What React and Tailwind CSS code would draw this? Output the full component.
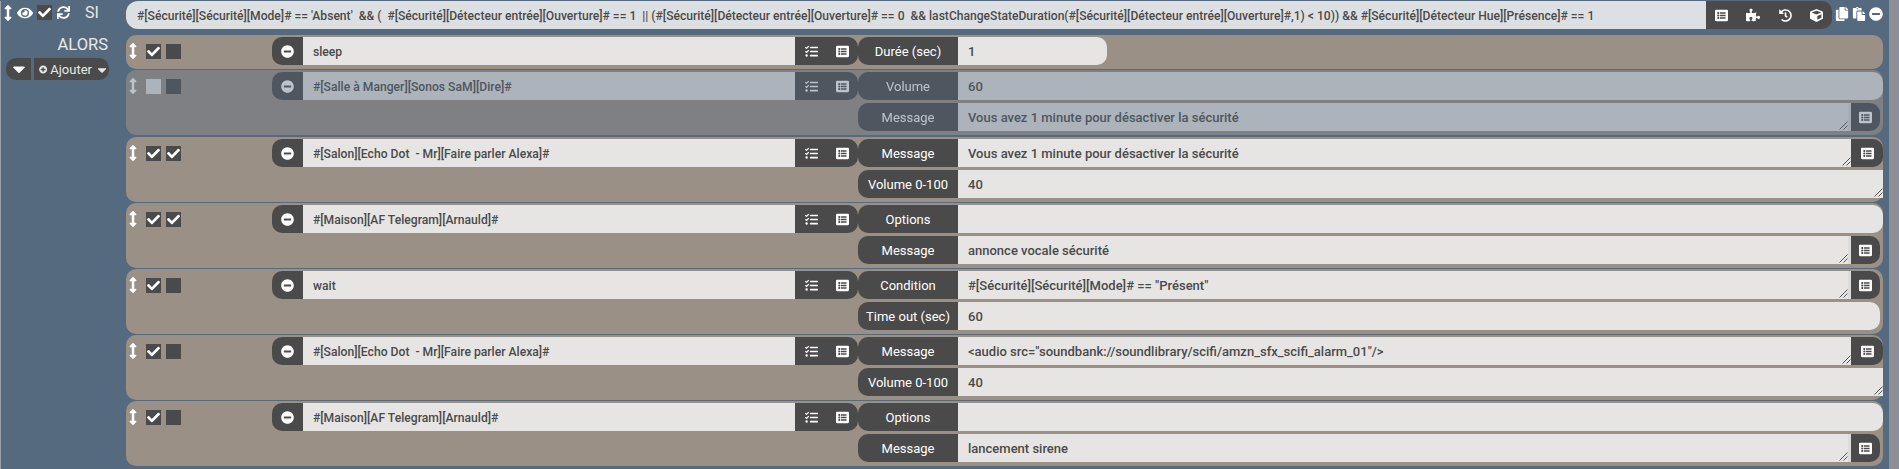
import {
  FaArrowsAltV, FaEye, FaCheck, FaSync, FaMinusCircle, FaTasks, FaListAlt, FaPuzzlePiece,
  FaHistory, FaCube, FaCopy, FaPaste, FaCaretDown, FaPlusCircle,
} from 'react-icons/fa';

const rows = [
  { cmd: 'sleep', first: 'on', second: 'off', params: [{ label: 'Durée (sec)', value: '1', short: true }] },
  {
    cmd: '#[Salle à Manger][Sonos SaM][Dire]#', first: 'light', second: 'off', disabled: true, gap: true,
    params: [
      { label: 'Volume', value: '60' },
      { label: 'Message', value: 'Vous avez 1 minute pour désactiver la sécurité', list: true, inset: true },
    ],
  },
  {
    cmd: '#[Salon][Echo Dot  - Mr][Faire parler Alexa]#', first: 'on', second: 'on',
    params: [
      { label: 'Message', value: 'Vous avez 1 minute pour désactiver la sécurité', list: true },
      { label: 'Volume 0-100', value: '40', area: true },
    ],
  },
  {
    cmd: '#[Maison][AF Telegram][Arnauld]#', first: 'on', second: 'on',
    params: [
      { label: 'Options', value: '' },
      { label: 'Message', value: 'annonce vocale sécurité', list: true, inset: true },
    ],
  },
  {
    cmd: 'wait', first: 'on', second: 'off',
    params: [
      { label: 'Condition', value: '#[Sécurité][Sécurité][Mode]# == "Présent"', list: true, inset: true },
      { label: 'Time out (sec)', value: '60', inset: true },
    ],
  },
  {
    cmd: '#[Salon][Echo Dot  - Mr][Faire parler Alexa]#', first: 'on', second: 'off',
    params: [
      { label: 'Message', value: '<audio src="soundbank://soundlibrary/scifi/amzn_sfx_scifi_alarm_01"/>', list: true },
      { label: 'Volume 0-100', value: '40', area: true },
    ],
  },
  {
    cmd: '#[Maison][AF Telegram][Arnauld]#', first: 'on', second: 'off',
    params: [
      { label: 'Options', value: '' },
      { label: 'Message', value: 'lancement sirene', list: true, inset: true },
    ],
  },
];

function Check({ state }) {
  return (
    <span
      className={`flex h-[15px] w-[15px] items-center justify-center text-white ${
        state === 'light' ? 'bg-[#e6e5e3]' : 'bg-[#4a4a4a]'
      }`}
    >
      {state === 'on' && <FaCheck size={13} />}
    </span>
  );
}

function ResizeHandle() {
  return (
    <svg className="absolute bottom-[1px] right-0" width="9" height="9" viewBox="0 0 9 9">
      <path d="M0.5 8.5 L8.5 0.5 M4.5 8.5 L8.5 4.5" stroke="#555" strokeWidth="1" fill="none" />
    </svg>
  );
}

function Param({ label, value, short, list, area, inset }) {
  const rounded = !list && !area;
  return (
    <div className={`flex h-[28px] ${inset ? 'mr-[3px]' : ''}`}>
      <div className="flex w-[100px] items-center justify-center rounded-l-[10px] bg-[#4a4a4a] pt-[1px] text-[13px] text-white">
        {label}
      </div>
      <div
        className={`relative flex items-center bg-[#e6e5e3] pt-[2px] pl-[10px] text-[13px] font-medium text-[#4a4a4a] ${
          short ? 'w-[149px]' : 'flex-1'
        } ${rounded ? 'rounded-r-[10px]' : ''}`}
      >
        {value}
        {(list || area) && <ResizeHandle />}
      </div>
      {list && (
        <>
          {inset && <div className="w-[3px] bg-[#dcdbd9]" />}
          <div
            className={`flex items-center justify-center rounded-r-[10px] bg-[#4a4a4a] text-white ${
              inset ? 'w-[29px]' : 'w-[32px]'
            }`}
          >
            <FaListAlt size={13} />
          </div>
        </>
      )}
    </div>
  );
}

function Row({ row }) {
  return (
    <div
      className={`flex rounded-[10px] bg-[#9a9085] pt-[2px] pb-[4px] ${row.gap ? 'mb-[2px]' : 'mb-[1px]'} ${
        row.disabled ? 'opacity-60' : ''
      }`}
    >
      <div className="flex h-[28px] w-[146px] items-center text-white">
        <span className="ml-[1px] flex w-[12px] justify-center"><FaArrowsAltV size={16} /></span>
        <span className="ml-[7px] flex gap-[5px]">
          <Check state={row.first} />
          <Check state={row.second} />
        </span>
      </div>
      <div className="flex h-[28px] w-[586px]">
        <div className="flex w-[31px] items-center justify-center rounded-l-[10px] bg-[#4a4a4a] text-white">
          <FaMinusCircle size={13} />
        </div>
        <div className="flex w-[492px] items-center whitespace-pre bg-[#e6e5e3] pt-[2px] pl-[10px] text-[12.15px] font-medium text-[#4a4a4a]">
          {row.cmd}
        </div>
        <div className="flex w-[63px] items-center justify-between rounded-r-[10px] bg-[#4a4a4a] pl-[10px] pr-[9px] text-white">
          <FaTasks size={13} />
          <FaListAlt size={13} />
        </div>
      </div>
      <div className="flex flex-1 flex-col gap-[3px]">
        {row.params.map((p) => (
          <Param key={p.label} {...p} />
        ))}
      </div>
    </div>
  );
}

export default function App() {
  return (
    <div className="flex h-[469px] w-[1899px] overflow-hidden font-['Roboto',sans-serif]">
      <div className="flex w-[1889px] bg-[#566a7f] pt-[1px]">
        <div className="w-[126px] shrink-0 border-l border-[#98a3ae] text-white">
          <div className="flex h-[28px] items-center pb-[5px]">
            <span className="ml-[1px] flex w-[12px] justify-center"><FaArrowsAltV size={16} /></span>
            <span className="ml-[3px]"><FaEye size={16} /></span>
            <span className="ml-[4px] flex h-[15px] w-[15px] items-center justify-center bg-[#4a4a4a]"><FaCheck size={13} /></span>
            <span className="ml-[5px]"><FaSync size={13} /></span>
            <span className="ml-[15px] text-[16px] text-[#e8e8e8]">SI</span>
          </div>
          <div className="mt-[4px] pr-[18px] text-right text-[16.5px] leading-[24px] text-[#e8e8e8]">ALORS</div>
          <div className="mt-[1px] flex h-[22px] pl-[5px] text-[13px] text-[#e8e8e8]">
            <div className="flex w-[25px] items-center justify-center rounded-l-[10px] bg-[#4a4a4a] text-white"><FaCaretDown size={20} /></div>
            <div className="ml-[3px] flex w-[75px] items-center rounded-r-[10px] bg-[#4a4a4a] pl-[5px] pt-[1px]">
              <FaPlusCircle size={11} />
              <span className="ml-[3px]">Ajouter</span>
              <span className="ml-[3px]"><FaCaretDown size={14} /></span>
            </div>
          </div>
        </div>
        <div className="w-[1757px] shrink-0">
          <div className="mb-[6px] flex h-[28px]">
            <div className="flex w-[1582px] items-center whitespace-pre rounded-l-[12px] bg-[#dde0e3] pt-[2px] pl-[11px] text-[12.1px] font-medium text-[#4a4a4a]">
              {"#[Sécurité][Sécurité][Mode]# == 'Absent'  && (  #[Sécurité][Détecteur entrée][Ouverture]# == 1  || (#[Sécurité][Détecteur entrée][Ouverture]# == 0  && lastChangeStateDuration(#[Sécurité][Détecteur entrée][Ouverture]#,1) < 10)) && #[Sécurité][Détecteur Hue][Présence]# == 1"}
            </div>
            <div className="flex w-[126px] items-center justify-between rounded-r-[10px] bg-[#4a4a4a] px-[9px] text-white">
              <FaListAlt size={13} />
              <FaPuzzlePiece size={14} />
              <FaHistory size={13} />
              <FaCube size={13} />
            </div>
            <div className="ml-[3px] flex items-center gap-[3px] pb-[2px] text-white">
              <FaCopy size={14} />
              <FaPaste size={14} />
              <FaMinusCircle size={14} />
            </div>
          </div>
          <div>
            {rows.map((row, i) => (
              <Row key={i} row={row} />
            ))}
          </div>
        </div>
      </div>
      <div className="flex-1 bg-[#8e8e96]" />
    </div>
  );
}
